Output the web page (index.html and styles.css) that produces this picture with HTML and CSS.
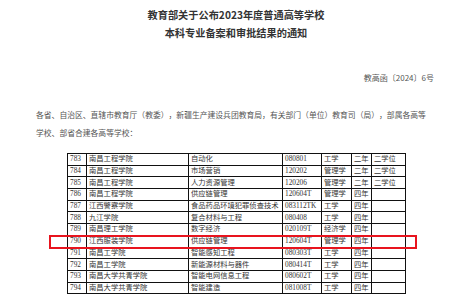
FILE: index.html
```html
<!DOCTYPE html>
<html lang="zh-CN">
<head>
    <meta charset="UTF-8">
    <meta name="viewport" content="width=device-width, initial-scale=1.0">
    <title>教育部关于公布2023年度普通高等学校本科专业备案和审批结果的通知</title>
    <link rel="stylesheet" href="styles.css">
</head>
<body>
    <div class="page">
        <h1 class="title">教育部关于公布2023年度普通高等学校<br>本科专业备案和审批结果的通知</h1>

        <div class="doc-no">教高函〔2024〕6号</div>

        <p class="intro">各省、自治区、直辖市教育厅（教委），新疆生产建设兵团教育局，有关部门（单位）教育司（局），部属各高等学校、部省合建各高等学校：</p>

        <div class="table-wrap">
            <table class="list">
                <colgroup>
                    <col class="c-no">
                    <col class="c-school">
                    <col class="c-major">
                    <col class="c-code">
                    <col class="c-type">
                    <col class="c-year">
                    <col class="c-degree">
                </colgroup>
                <tr><td>783</td><td>南昌工程学院</td><td>自动化</td><td>080801</td><td>工学</td><td>二年</td><td>二学位</td></tr>
                <tr><td>784</td><td>南昌工程学院</td><td>市场营销</td><td>120202</td><td>管理学</td><td>二年</td><td>二学位</td></tr>
                <tr><td>785</td><td>南昌工程学院</td><td>人力资源管理</td><td>120206</td><td>管理学</td><td>二年</td><td>二学位</td></tr>
                <tr><td>786</td><td>南昌工程学院</td><td>供应链管理</td><td>120604T</td><td>管理学</td><td>四年</td><td></td></tr>
                <tr><td>787</td><td>江西警察学院</td><td>食品药品环境犯罪侦查技术</td><td>083112TK</td><td>工学</td><td>四年</td><td></td></tr>
                <tr><td>788</td><td>九江学院</td><td>复合材料与工程</td><td>080408</td><td>工学</td><td>四年</td><td></td></tr>
                <tr><td>789</td><td>南昌理工学院</td><td>数字经济</td><td>020109T</td><td>经济学</td><td>四年</td><td></td></tr>
                <tr><td>790</td><td>江西服装学院</td><td>供应链管理</td><td>120604T</td><td>管理学</td><td>四年</td><td></td></tr>
                <tr><td>791</td><td>南昌工学院</td><td>智能感知工程</td><td>080303T</td><td>工学</td><td>四年</td><td></td></tr>
                <tr><td>792</td><td>南昌工学院</td><td>新能源材料与器件</td><td>080414T</td><td>工学</td><td>四年</td><td></td></tr>
                <tr><td>793</td><td>南昌大学共青学院</td><td>智能电网信息工程</td><td>080602T</td><td>工学</td><td>四年</td><td></td></tr>
                <tr><td>794</td><td>南昌大学共青学院</td><td>智能建造</td><td>081008T</td><td>工学</td><td>四年</td><td></td></tr>
            </table>
            <div class="highlight"></div>
        </div>
    </div>
</body>
</html>
```

FILE: styles.css
```css
html {
    overflow: hidden;
}
body {
    margin: 0;
    background: #fff;
    font-family: "Noto Sans CJK SC", "Noto Sans", sans-serif;
    color: #444;
    text-spacing-trim: space-all;
}
.page {
    width: 472px;
}
.title {
    margin: 0;
    padding-top: 6px;
    text-align: center;
    font-size: 10.2px;
    line-height: 18px;
    font-weight: bold;
    color: #333;
}
.doc-no {
    margin-top: 30px;
    padding-right: 38px;
    text-align: right;
    font-size: 8px;
    line-height: 12px;
    color: #555;
}
.intro {
    margin: 22px 0 0 36px;
    width: 393px;
    font-size: 7.8px;
    line-height: 18px;
    color: #555;
}
.table-wrap {
    position: relative;
    margin: 11px 0 0 67px;
    width: 338px;
}
.list {
    border-collapse: collapse;
    table-layout: fixed;
    width: 338px;
    font-family: "Liberation Serif", "Noto Sans CJK SC", serif;
    font-size: 7.3px;
    color: #333;
}
.list td {
    height: 10.7px;
    padding: 0 0 0 2px;
    border: 1px solid #111;
    line-height: 10px;
    white-space: nowrap;
    overflow: hidden;
}
.c-no { width: 19px; }
.c-school { width: 102px; }
.c-major { width: 94px; }
.c-code { width: 39px; }
.c-type { width: 30px; }
.c-year { width: 20px; }
.c-degree { width: 34px; }

/* 红框标注 790 行 */
.highlight {
    position: absolute;
    left: -18px;
    top: 82px;
    width: 364px;
    height: 10px;
    border: 2px solid #e8141e;
}
```
